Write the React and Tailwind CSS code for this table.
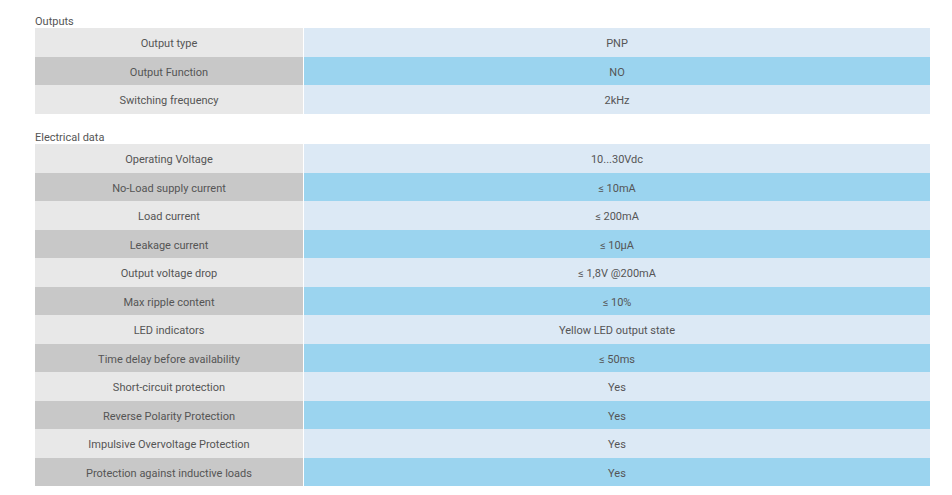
import React from 'react';

const outputs = [
  ['Output type', 'PNP'],
  ['Output Function', 'NO'],
  ['Switching frequency', '2kHz'],
];

const electrical = [
  ['Operating Voltage', '10...30Vdc'],
  ['No-Load supply current', '≤ 10mA'],
  ['Load current', '≤ 200mA'],
  ['Leakage current', '≤ 10µA'],
  ['Output voltage drop', '≤ 1,8V @200mA'],
  ['Max ripple content', '≤ 10%'],
  ['LED indicators', 'Yellow LED output state'],
  ['Time delay before availability', '≤ 50ms'],
  ['Short-circuit protection', 'Yes'],
  ['Reverse Polarity Protection', 'Yes'],
  ['Impulsive Overvoltage Protection', 'Yes'],
  ['Protection against inductive loads', 'Yes'],
];

function SpecTable({ title, rows }) {
  return (
    <div>
      <div className="h-[14px] text-[11px] leading-[16px] text-[#555]">{title}</div>
      <div>
        {rows.map(([label, value], i) => (
          <div key={label} className={'flex ' + (i % 2 === 0 ? 'h-[29px]' : 'h-[28px]')}>
            <div
              className={
                'w-[268px] flex items-center justify-center pt-[4px] ' +
                (i % 2 === 0 ? 'bg-[#e8e8e8]' : 'bg-[#c8c8c8]')
              }
            >
              {label}
            </div>
            <div className="w-px bg-white" />
            <div
              className={
                'flex-1 flex items-center justify-center pt-[4px] ' +
                (i % 2 === 0 ? 'bg-[#dce9f5]' : 'bg-[#9bd4ef]')
              }
            >
              {value}
            </div>
          </div>
        ))}
      </div>
    </div>
  );
}

export default function App() {
  return (
    <div
      className="w-[952px] h-[495px] bg-white pl-[35px] pt-[14px] text-[11px] text-[#555]"
      style={{ fontFamily: 'Roboto, "Liberation Sans", sans-serif' }}
    >
      <div className="w-[895px] flex flex-col gap-[16px]">
        <SpecTable title="Outputs" rows={outputs} />
        <SpecTable title="Electrical data" rows={electrical} />
      </div>
    </div>
  );
}
